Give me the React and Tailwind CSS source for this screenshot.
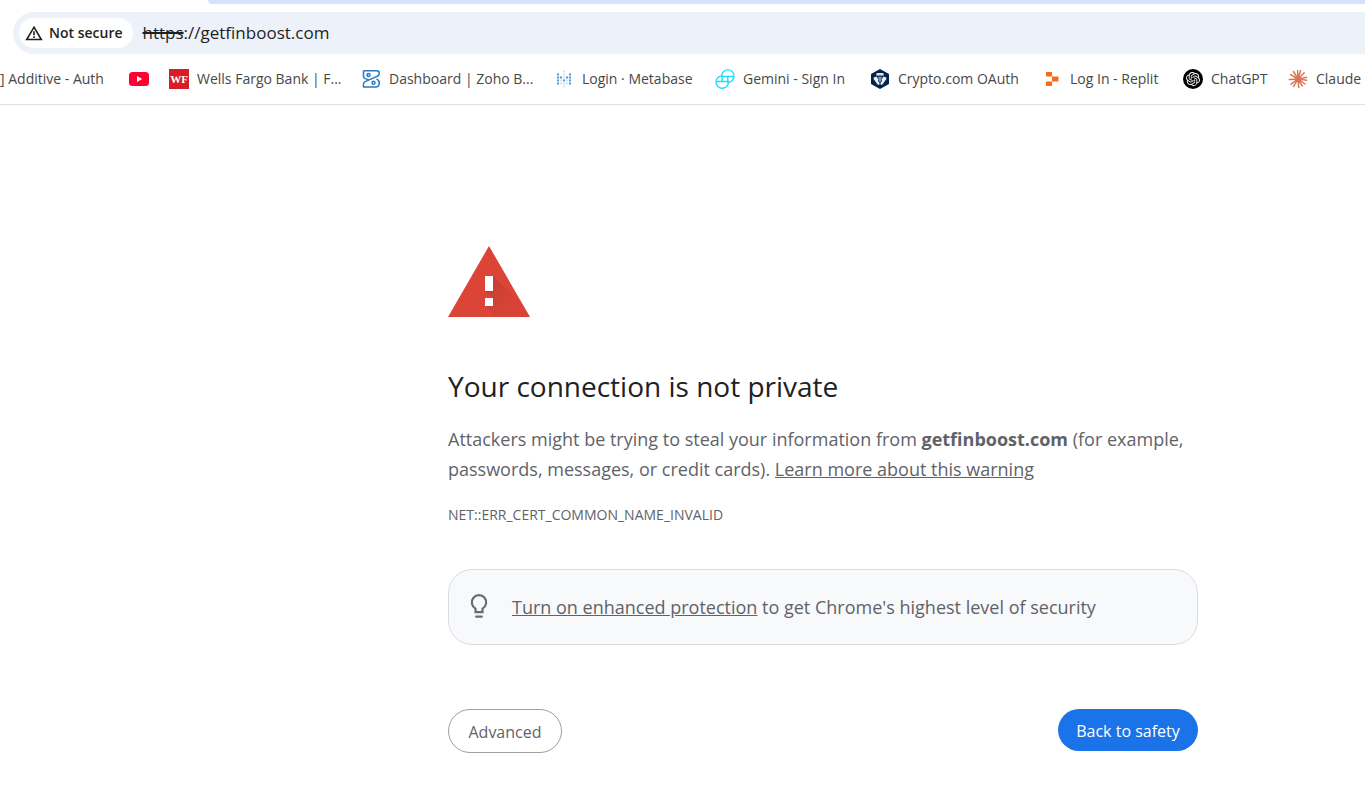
import { SiOpenai } from "react-icons/si";

function YoutubeIcon() {
  return (
    <svg viewBox="0 0 20 20" className="size-5 shrink-0" aria-hidden="true">
      <rect x="0" y="3" width="20" height="14" rx="3.5" fill="#ff0033" />
      <path d="M8 7v6l5.2-3z" fill="#fff" />
    </svg>
  );
}

function WellsFargoIcon() {
  return (
    <span aria-hidden="true" className="flex size-5 shrink-0 items-center justify-center bg-[#d71e28] font-['Liberation_Serif',serif] text-[11px] leading-none font-bold text-white">
      WF
    </span>
  );
}

function ZohoIcon() {
  return (
    <svg viewBox="0 0 20 20" className="size-5 shrink-0" fill="none" stroke="#2a78c2" strokeWidth="1.5" strokeLinejoin="round" aria-hidden="true">
      <path d="M2.500 1.800h13.200q2.600 0 2.600 2.400 0 2.200-2.200 3.200L4.200 12.600q-1.700.8-1.700 2.500v2.900h12q3.800 0 3.800-4 0-2.800-2.800-4.200M2.500 1.800v5.400q0 1.800 1.600 2.400l3.200 1" />
      <circle cx="7.500" cy="6" r="1.500" />
      <circle cx="12.500" cy="13.800" r="1.500" />
    </svg>
  );
}

const METABASE_ROWS = ["00100", "20102", "22122", "21212", "21112", "00100"];

function MetabaseIcon() {
  return (
    <svg viewBox="0 0 20 20" className="size-5 shrink-0" fill="#509ee3" aria-hidden="true">
      {METABASE_ROWS.flatMap((row, y) =>
        [...row].map((dot, x) =>
          dot === "0" ? null : (
            <circle key={`${x}-${y}`} cx={4 + x * 3} cy={2.5 + y * 3} r="1.150" opacity={dot === "2" ? 1 : 0.25} />
          )
        )
      )}
    </svg>
  );
}

function GeminiIcon() {
  return (
    <svg viewBox="0 0 20 20" className="size-5 shrink-0" fill="none" stroke="#26ddf9" strokeWidth="1.4" aria-hidden="true">
      <path d="M6.600 7.500A6.200 6.200 0 1 1 12.800 13.300V7.500z" />
      <path d="M13.400 12.500A6.200 6.200 0 1 1 7.200 6.900V12.500z" />
      <path d="M12.800 7.500h6.200M1 12.500h6.200" />
    </svg>
  );
}

function CryptoIcon() {
  return (
    <svg viewBox="0 0 20 20" className="size-5 shrink-0" aria-hidden="true">
      <path d="M10 0l9 5v10l-9 5-9-5V5z" fill="#03234f" />
      <path d="M6.800 4h6.400l.7 2.600H6.100z" fill="#dfe6f1" />
      <path d="M3.800 8.400l2.600-1 2 2.800-.5 2 1.500 1.400v2.200H7.800L3.600 10zM16.200 8.400l-2.600-1-2 2.800.5 2-1.500 1.400v2.200h1.600L16.400 10z" fill="#eef2f8" />
      <path d="M7.800 7.800h4.400l-1 2.500.4 1.500-1 1H9.400l-1-1 .4-1.500z" fill="#8795b2" />
    </svg>
  );
}

function ReplitIcon() {
  return (
    <svg viewBox="0 0 20 20" className="size-5 shrink-0" fill="#fb6a12" aria-hidden="true">
      <path d="M4.800 3h4.400q.8 0 .8.800V7.500H4.800q-.8 0-.8-.8V3.800q0-.8.800-.8z" />
      <path d="M10 7.500h5.700q.8 0 .8.800v3.400q0 .8-.8.800H10z" />
      <path d="M4.800 12.500H10v3.700q0 .8-.8.800H4.800q-.8 0-.8-.8v-2.900q0-.8.800-.8z" />
    </svg>
  );
}

function ChatGptIcon() {
  return (
    <span className="flex size-5 shrink-0 items-center justify-center rounded-full bg-black text-white">
      <SiOpenai className="size-3.5" aria-hidden="true" />
    </span>
  );
}

function ClaudeIcon() {
  return (
    <svg viewBox="0 0 20 20" className="size-5 shrink-0" fill="none" stroke="#d97757" strokeWidth="1.500" strokeLinecap="round" aria-hidden="true">
      <path d="M10 10L9.600 1.400M10 10l2.600-8.200M10 10l6.200-6.300M10 10l8.600-1.800M10 10l8.700 1.200M10 10l7 5M10 10l4.300 7M10 10l.7 8.600M10 10l-4.400 7.400M10 10l-7 5.200M10 10l-8.700.6M10 10L2.600 5.700M10 10L5.500 2.500" />
      <circle cx="10" cy="10" r="2" fill="#d97757" />
    </svg>
  );
}

function WarningOutlineIcon() {
  return (
    <svg viewBox="0 0 18 16" className="h-4 w-[18px] shrink-0" fill="none" stroke="#1f1f1f" strokeWidth="1.600" aria-hidden="true">
      <path d="M9 2.200L16.300 14.500H1.700z" />
      <path d="M9 6.200v4M9 11.300v1.600" />
    </svg>
  );
}

function DangerIcon() {
  return (
    <svg viewBox="0 0 82 72" className="h-[72px] w-[82px]" role="img" aria-label="Warning">
      <defs>
        <linearGradient id="shade" gradientUnits="userSpaceOnUse" x1="40" y1="35" x2="66" y2="61">
          <stop offset="0" stopColor="#b23a2e" stopOpacity="0.600" />
          <stop offset="1" stopColor="#c93f33" stopOpacity="0.150" />
        </linearGradient>
        <clipPath id="triangle">
          <path d="M41 1L82 72H0z" />
        </clipPath>
      </defs>
      <path d="M41 1L82 72H0z" fill="#db4437" />
      <g clipPath="url(#triangle)" fill="url(#shade)">
        <path d="M45 31l42 42H64L37 46h8z" />
        <path d="M45 53l20 20H49L37 61z" />
      </g>
      <path d="M37 31h8v15h-8zM37 53h8v8h-8z" fill="#fff" />
    </svg>
  );
}

function BulbIcon() {
  return (
    <svg viewBox="0 0 18 24" className="mb-0.5 h-6 w-[18px] shrink-0" fill="none" stroke="#6b6b6b" strokeWidth="2.200" aria-hidden="true">
      <path d="M5.500 18.200v-3.600A7.200 7.200 0 1 1 12.500 14.600V18.200z" />
      <path d="M6.200 22.700h5.600" strokeLinecap="round" />
    </svg>
  );
}

const BOOKMARKS = [
  { label: "", name: "YouTube", Icon: YoutubeIcon, width: "" },
  { label: "Wells Fargo Bank | F...", Icon: WellsFargoIcon, width: "w-[144px]" },
  { label: "Dashboard | Zoho B...", Icon: ZohoIcon, width: "w-[145px]" },
  { label: "Login · Metabase", Icon: MetabaseIcon, width: "w-[113px]" },
  { label: "Gemini - Sign In", Icon: GeminiIcon, width: "w-[107px]" },
  { label: "Crypto.com OAuth", Icon: CryptoIcon, width: "w-[124px]" },
  { label: "Log In - Replit", Icon: ReplitIcon, width: "w-[93px]" },
  { label: "ChatGPT", Icon: ChatGptIcon, width: "w-[57px]" },
  { label: "Claude", Icon: ClaudeIcon, width: "w-[46px]" },
];

function Toolbar() {
  return (
    <header className="overflow-hidden border-b border-[#dfe0e2]">
      <div className="ml-[208px] h-1 rounded-bl-lg bg-[#d3e3fd]" />
      <div className="mt-2 ml-[13px] flex h-[42px] items-center rounded-l-full bg-[#edf1fa] pl-1.5">
        <button type="button" className="flex h-[30px] shrink-0 items-center gap-1.5 rounded-full bg-white pr-2.5 pl-1.5 text-sm font-semibold text-[#1f1f1f]">
          <WarningOutlineIcon />
          Not secure
        </button>
        <div className="ml-2.5 text-[17px] text-[#1f1f1f]" aria-label="Address">
          <span className="line-through decoration-2">https</span>://getfinboost.com
        </div>
      </div>
      <nav aria-label="Bookmarks" className="flex h-[50px] items-center gap-5 text-sm whitespace-nowrap text-[#474747]">
        <a href="#additive" className="w-[109px] shrink-0">] Additive - Auth</a>
        {BOOKMARKS.map(({ label, name, Icon, width }) => (
          <a key={label || name} href="#bookmark" aria-label={name} className="flex shrink-0 items-center gap-2">
            <Icon />
            {label && <span className={width}>{label}</span>}
          </a>
        ))}
      </nav>
    </header>
  );
}

export default function App() {
  return (
    <div className="bg-white font-['Open_Sans','Noto_Sans',sans-serif]">
      <Toolbar />
      <main className="ml-[448px] max-w-[750px] pt-[140px] pb-11 text-lg text-[#5f6368]">
        <DangerIcon />
        <h1 className="mt-[49px] text-[28px] leading-10 text-[#202124]">Your connection is not private</h1>
        <p className="mt-[18px] leading-[30px]">
          Attackers might be trying to steal your information from <strong>getfinboost.com</strong> (for example,
          passwords, messages, or credit cards).{" "}
          <a href="#learn" className="underline">Learn more about this warning</a>
        </p>
        <p className="mt-[21px] text-sm leading-5">NET::ERR_CERT_COMMON_NAME_INVALID</p>
        <section className="mt-11 flex h-[76px] items-center gap-6 rounded-3xl border border-[#dadce0] bg-[#f8f9fb] px-[21px]">
          <BulbIcon />
          <p>
            <a href="#protection" className="underline">Turn on enhanced protection</a> to get Chrome's highest level of security
          </p>
        </section>
        <div className="mt-16 flex items-start justify-between text-base">
          <button type="button" className="h-11 w-[114px] rounded-full border border-[#9aa0a6] pt-0.5">Advanced</button>
          <button type="button" className="h-[42px] w-[140px] rounded-full bg-[#1a73e8] pt-0.5 text-white">Back to safety</button>
        </div>
      </main>
    </div>
  );
}
